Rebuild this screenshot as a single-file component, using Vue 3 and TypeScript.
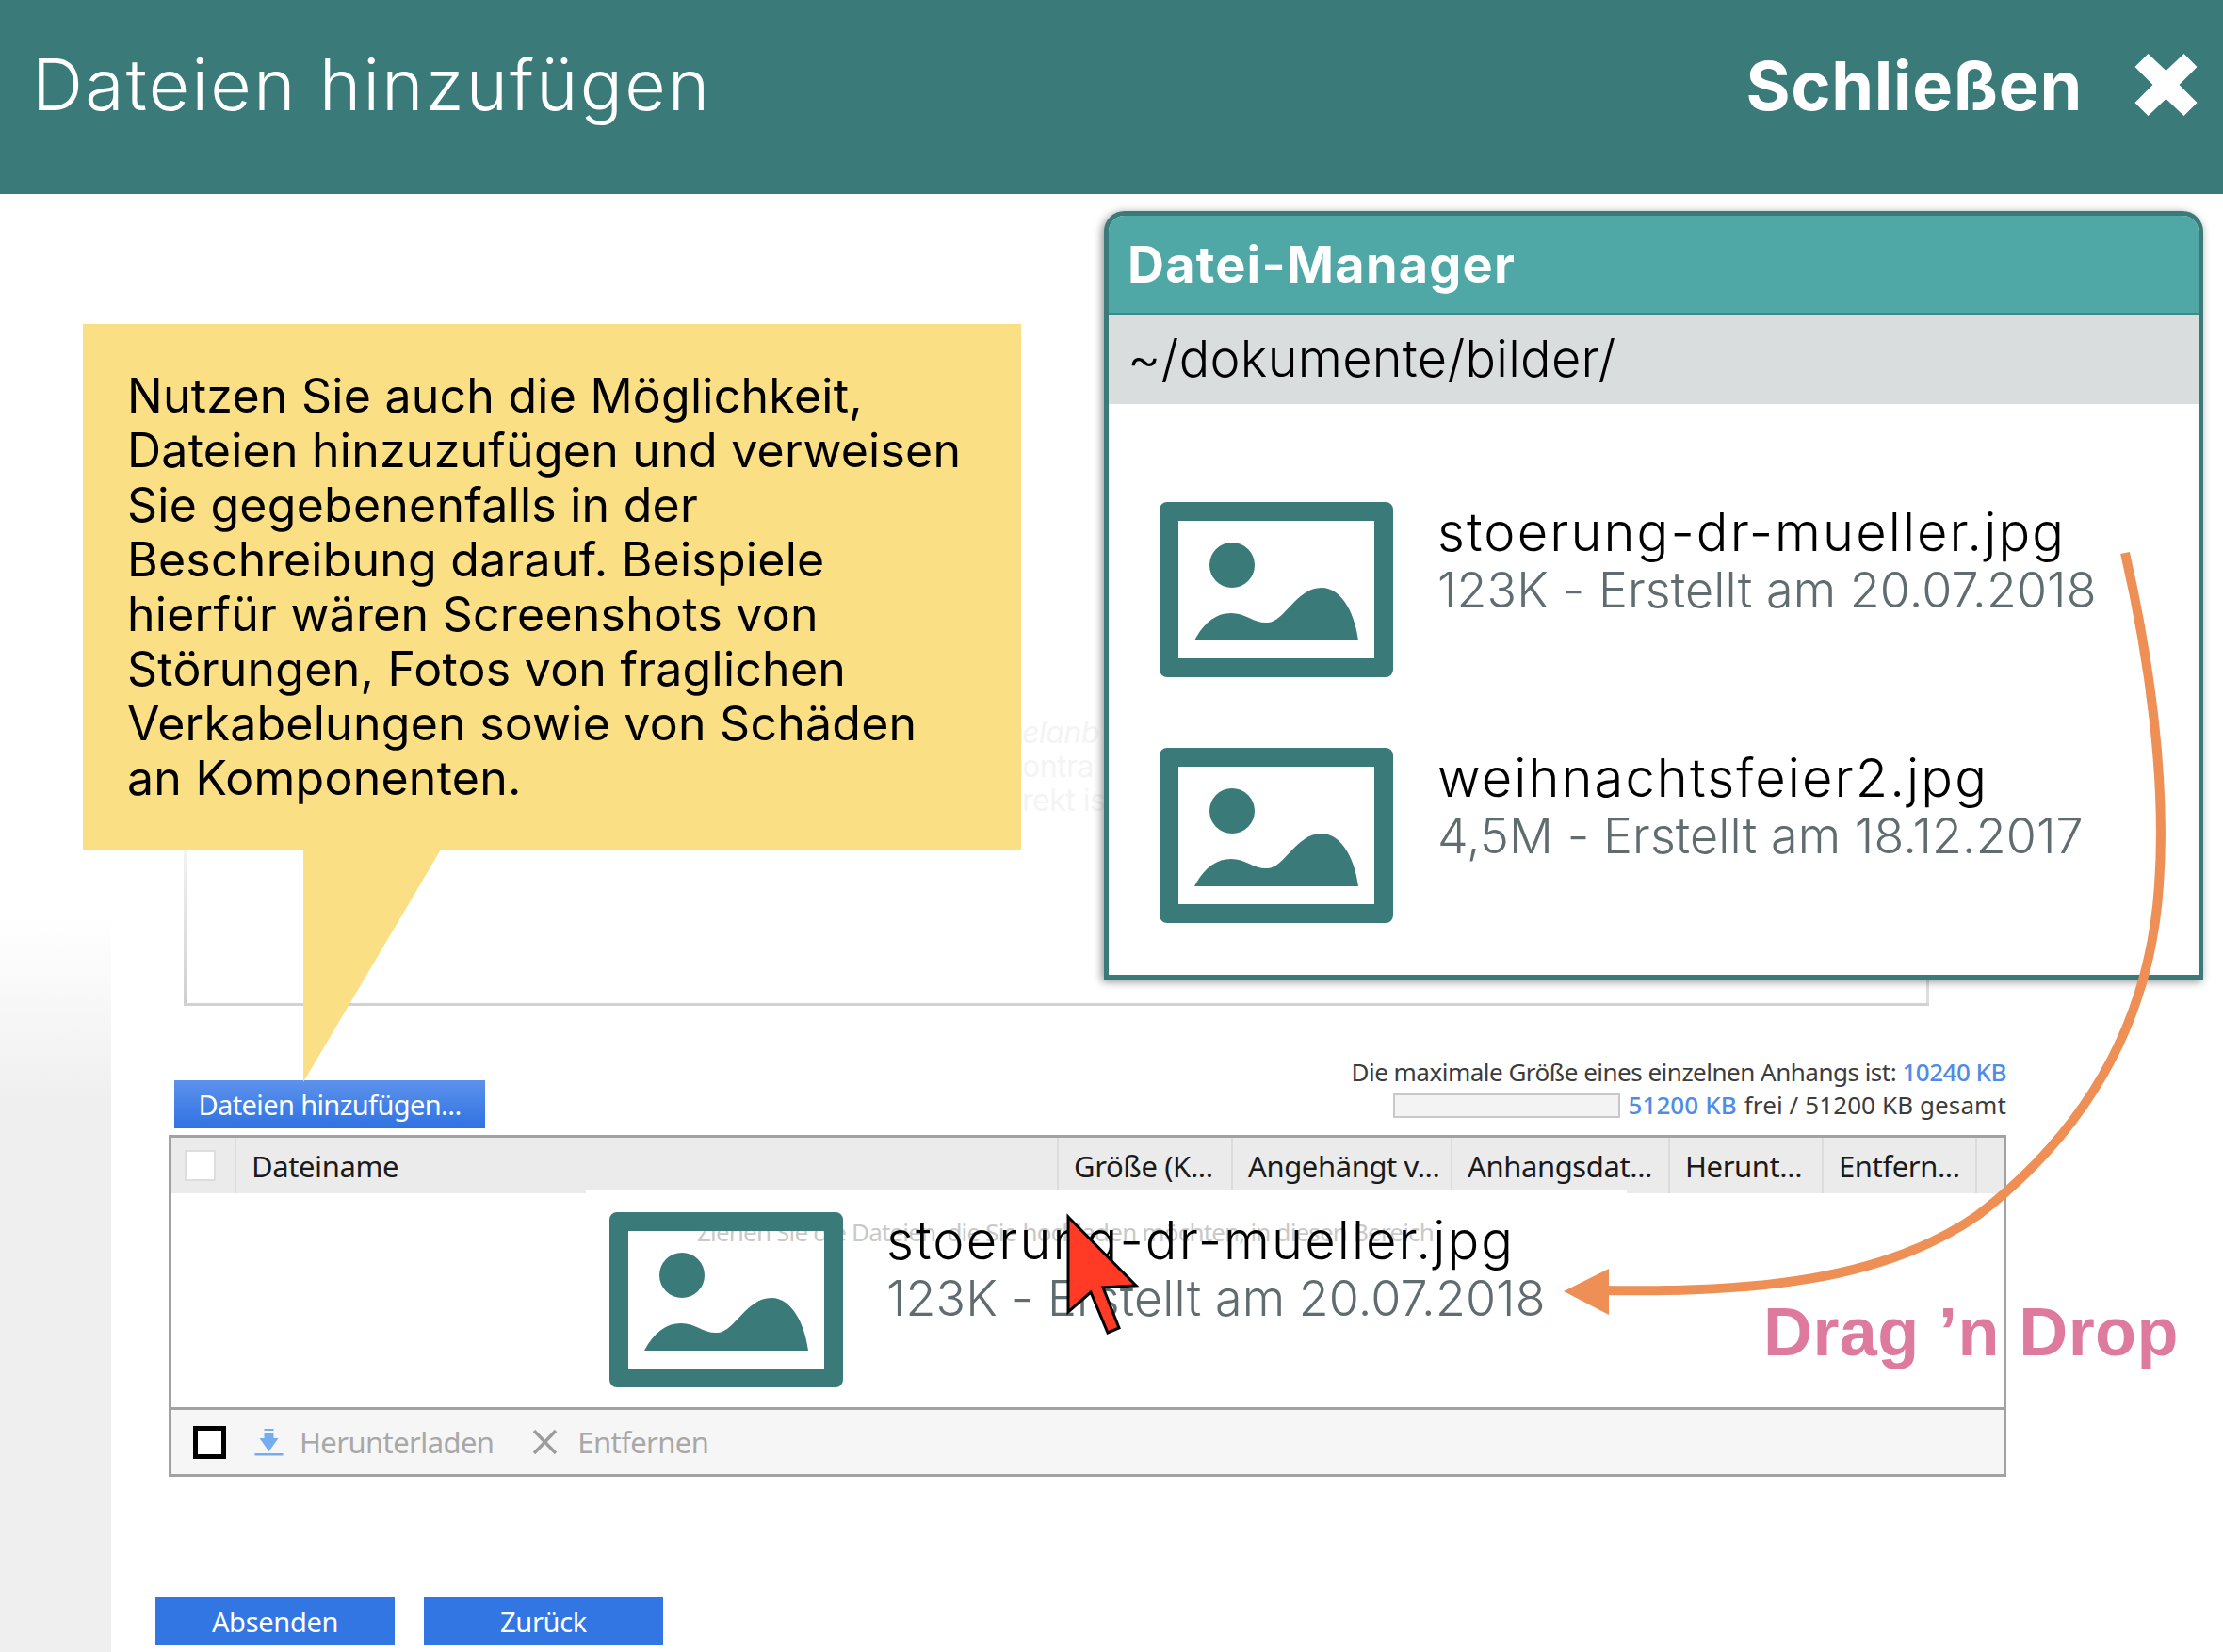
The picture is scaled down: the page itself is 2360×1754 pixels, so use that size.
<script setup lang="ts">
interface FileEntry {
  name: string
  meta: string
}

const managerFiles: FileEntry[] = [
  { name: 'stoerung-dr-mueller.jpg', meta: '123K - Erstellt am 20.07.2018' },
  { name: 'weihnachtsfeier2.jpg', meta: '4,5M - Erstellt am 18.12.2017' },
]

const tableColumns = ['Dateiname', 'Größe (K...', 'Angehängt v...', 'Anhangsdat...', 'Herunt...', 'Entfern...', '']

const calloutLines = [
  'Nutzen Sie auch die Möglichkeit,',
  'Dateien hinzuzufügen und verweisen',
  'Sie gegebenenfalls in der',
  'Beschreibung darauf. Beispiele',
  'hierfür wären Screenshots von',
  'Störungen, Fotos von fraglichen',
  'Verkabelungen sowie von Schäden',
  'an Komponenten.',
]
</script>

<template>
  <div class="page">
    <svg class="defs" width="0" height="0" aria-hidden="true">
      <symbol id="picture-icon" viewBox="0 0 248 186">
        <path fill-rule="evenodd" d="M8 0H240a8 8 0 0 1 8 8V178a8 8 0 0 1-8 8H8a8 8 0 0 1-8-8V8a8 8 0 0 1 8-8ZM20 20V166H228V20Z" />
        <circle cx="77" cy="67" r="24" />
        <path d="M37 147C47 128 60 118 76 118C92 118 100 129 115 128C133 127 145 91 172 91C195 91 208 122 211 147Z" />
      </symbol>
    </svg>

    <header class="topbar">
      <h1 class="topbar-title">Dateien hinzufügen</h1>
      <div class="topbar-close">
        <span>Schließen</span>
        <svg class="close-icon" viewBox="0 0 66 66" width="67" height="66">
          <path d="M0 14 14 0 33 18 52 0 66 14 47 33 66 52 52 66 33 48 14 66 0 52 19 33Z" fill="#fff" />
        </svg>
      </div>
    </header>

    <div class="body">
      <aside class="side"></aside>
      <main class="form">
        <div class="desc-box">
          <div class="ghost ghost-em">elanb</div>
          <div class="ghost">ontra</div>
          <div class="ghost">rekt is</div>
        </div>

        <div class="upload-row">
          <button class="btn btn-add" type="button">Dateien hinzufügen...</button>
          <div class="quota">
            <div>Die maximale Größe eines einzelnen Anhangs ist: <b class="quota-val">10240 KB</b></div>
            <div class="quota-line">
              <span class="quota-bar"></span>
              <b class="quota-val">51200 KB</b>
              <span>frei / 51200 KB gesamt</span>
            </div>
          </div>
        </div>

        <section class="table">
          <div class="table-head">
            <div class="head-check"><span class="check-light"></span></div>
            <div v-for="col in tableColumns" :key="col" class="head-cell">{{ col }}</div>
          </div>
          <div class="dropzone">Ziehen Sie die Dateien, die Sie hochladen möchten, in diesen Bereich</div>
          <div class="table-foot">
            <span class="check-dark"></span>
            <svg class="dl-icon" viewBox="0 0 30 29" width="31" height="29">
              <path d="M10 0H20V2H10ZM10 4H20V10H25L15 24 5 10H10ZM0 26H30V28.5H0Z" fill="#74acf0" />
            </svg>
            <span class="foot-label">Herunterladen</span>
            <svg class="rm-icon" viewBox="0 0 27 26" width="27" height="26">
              <path d="M2 1 25 25M25 1 2 25" stroke="#9c9c9c" stroke-width="3.5" fill="none" />
            </svg>
            <span class="foot-label">Entfernen</span>
          </div>
        </section>

        <div class="submit-row">
          <button class="btn btn-submit" type="button">Absenden</button>
          <button class="btn btn-submit" type="button">Zurück</button>
        </div>
      </main>
    </div>

    <!-- annotations lying over the form -->
    <div class="callout">
      <div v-for="line in calloutLines" :key="line" class="callout-line">{{ line }}</div>
      <svg class="callout-tail" viewBox="0 0 146 247" width="146" height="247">
        <path d="M0 0H146L0 247Z" fill="#fadf85" />
      </svg>
    </div>

    <section class="manager">
      <h2 class="manager-title">Datei-Manager</h2>
      <div class="manager-path">~/dokumente/bilder/</div>
      <ul class="manager-list">
        <li v-for="file in managerFiles" :key="file.name" class="file">
          <svg class="file-icon"><use href="#picture-icon" /></svg>
          <div class="file-text">
            <div class="file-name">{{ file.name }}</div>
            <div class="file-meta">{{ file.meta }}</div>
          </div>
        </li>
      </ul>
    </section>

    <div class="drag-strip"></div>
    <div class="file dragged">
      <svg class="file-icon"><use href="#picture-icon" /></svg>
      <div class="file-text">
        <div class="file-name">stoerung-dr-mueller.jpg</div>
        <div class="file-meta">123K - Erstellt am 20.07.2018</div>
      </div>
    </div>

    <svg class="drag-arrow" viewBox="0 0 2360 1754" width="2360" height="1754">
      <path d="M2256 587C2282 700 2300 830 2292 940C2282 1090 2210 1205 2100 1290C2000 1360 1860 1373 1700 1370" fill="none" stroke="#ee8f55" stroke-width="10" />
      <path d="M1660 1371 1708 1347V1396Z" fill="#ee8f55" />
      <path d="M1134 1292 1206 1365 1171 1367 1188 1410 1176 1415 1158 1372 1134 1393Z" fill="#ff3b25" stroke="#000" stroke-width="3" />
    </svg>

    <div class="drag-label">Drag ’n Drop</div>
  </div>
</template>

<style scoped>
.page {
  position: relative;
  width: 2360px;
  height: 1754px;
  overflow: hidden;
  background: #fff;
  font-family: Inter, "Noto Sans", sans-serif;
  color: #000;
}

.defs {
  position: absolute;
}

.topbar {
  display: flex;
  justify-content: space-between;
  height: 206px;
  padding: 0 27px 0 34px;
  box-sizing: border-box;
  background: #3a7b7a;
  color: #fff;
}

.topbar-title {
  margin: 47px 0 0;
  font-size: 75px;
  line-height: 86px;
  font-weight: 300;
  letter-spacing: 2.3px;
}

.topbar-close {
  display: flex;
  align-items: flex-start;
  gap: 55px;
  padding-top: 48px;
  font-size: 72px;
  line-height: 86px;
  font-weight: 700;
  letter-spacing: 0.7px;
}

.close-icon {
  margin-top: 9px;
}

.body {
  display: flex;
  height: 1548px;
}

.side {
  width: 118px;
  flex: none;
  background: linear-gradient(#fff 767px, #efefef 967px);
}

.form {
  flex: 1;
  min-width: 0;
  padding-left: 47px;
}

.desc-box {
  width: 1853px;
  height: 862px;
  margin-left: 30px;
  padding-top: 554px;
  box-sizing: border-box;
  border-bottom: 3px solid #d2d2d2;
  background:
    linear-gradient(#f4f4f4, #cfcfcf) left bottom / 3px 170px no-repeat,
    linear-gradient(#ddd, #ddd) right bottom / 3px 30px no-repeat;
}

.ghost {
  margin-left: 890px;
  font-size: 32px;
  line-height: 36px;
  letter-spacing: -0.5px;
  color: #f4f4f4;
  white-space: nowrap;
}

.ghost-em {
  font-style: italic;
}

.upload-row {
  display: flex;
  align-items: flex-end;
  justify-content: space-between;
  width: 1945px;
  height: 130px;
  margin-left: 20px;
}

.btn {
  border: 0;
  padding: 0;
  color: #fff;
  font-family: "Noto Sans", sans-serif;
  font-size: 29px;
}

.btn-add {
  width: 330px;
  height: 51px;
  background: linear-gradient(#5d92ec, #2f72e2);
  letter-spacing: -0.6px;
}

.quota {
  margin-bottom: 7px;
  font-family: "Noto Sans", sans-serif;
  font-size: 26px;
  line-height: 35px;
  color: #3c3c3c;
  letter-spacing: -0.5px;
  text-align: right;
  white-space: nowrap;
}

.quota-val {
  font-weight: 500;
  color: #4f8ce6;
}

.quota-line {
  display: flex;
  justify-content: flex-end;
  align-items: center;
  gap: 8px;
  letter-spacing: 0.1px;
}

.quota-bar {
  width: 241px;
  height: 26px;
  box-sizing: border-box;
  border: 2px solid #c8c8c8;
  background: #f3f3f3;
}

.table {
  display: flex;
  flex-direction: column;
  width: 1951px;
  height: 363px;
  margin-top: 7px;
  margin-left: 14px;
  box-sizing: border-box;
  border: 3px solid #a2a2a2;
}

.table-head {
  display: grid;
  grid-template-columns: 67px 873px 185px 233px 231px 163px 163px 1fr;
  height: 59px;
  background: #ebebeb;
  font-family: "Noto Sans", sans-serif;
  font-size: 31px;
  letter-spacing: -0.4px;
}

.head-check {
  display: flex;
  align-items: center;
  padding-left: 14px;
}

.check-light {
  width: 33px;
  height: 33px;
  box-sizing: border-box;
  border: 2px solid #ddd;
  background: #fff;
}

.head-cell {
  padding: 9px 0 0 16px;
  border-left: 2px solid #dcdcdc;
  white-space: nowrap;
  overflow: hidden;
  color: #1a1a1a;
}

.dropzone {
  height: 230px;
  padding: 23px 0 0 558px;
  box-sizing: border-box;
  border-bottom: 3px solid #a2a2a2;
  font-family: "Noto Sans", sans-serif;
  font-size: 26px;
  letter-spacing: -0.82px;
  color: #c9c9c9;
  white-space: nowrap;
}

.table-foot {
  display: flex;
  align-items: center;
  flex: 1;
  padding-left: 23px;
  background: #f6f6f6;
  font-family: "Noto Sans", sans-serif;
  font-size: 31px;
  letter-spacing: -0.6px;
  color: #a8a8a8;
}

.check-dark {
  width: 35px;
  height: 35px;
  box-sizing: border-box;
  border: 5px solid #000;
  background: #fff;
}

.dl-icon {
  margin-left: 30px;
}

.foot-label {
  margin-left: 17px;
}

.rm-icon {
  margin-left: 41px;
}

.rm-icon + .foot-label {
  margin-left: 21px;
}

.submit-row {
  display: flex;
  gap: 31px;
  margin-top: 128px;
}

.btn-submit {
  width: 254px;
  height: 51px;
  background: #3176e3;
  letter-spacing: -0.3px;
}

.callout {
  position: absolute;
  left: 88px;
  top: 344px;
  width: 996px;
  height: 558px;
  padding: 47px 0 0 47px;
  box-sizing: border-box;
  background: #fadf85;
}

.callout-line {
  font-size: 50px;
  line-height: 58px;
  letter-spacing: 0.25px;
  white-space: nowrap;
}

.callout-tail {
  position: absolute;
  left: 234px;
  top: 100%;
}

.manager {
  position: absolute;
  left: 1172px;
  top: 224px;
  width: 1167px;
  height: 816px;
  box-sizing: border-box;
  border: 5px solid #3a7b7a;
  border-radius: 22px 22px 0 0;
  background: #fff;
  box-shadow: -2px 2px 10px rgba(0, 0, 0, 0.45);
}

.manager-title {
  height: 105px;
  margin: 0;
  padding: 21px 0 0 20px;
  box-sizing: border-box;
  border-radius: 17px 17px 0 0;
  border-bottom: 2px solid #3a8a88;
  background: #4fa8a5;
  color: #fff;
  font-size: 54px;
  line-height: 62px;
  font-weight: 700;
  letter-spacing: 1.2px;
}

.manager-path {
  height: 95px;
  padding: 18px 0 0 20px;
  box-sizing: border-box;
  background: #dadddd;
  font-size: 54px;
  line-height: 58px;
  font-weight: 300;
  letter-spacing: 0.3px;
}

.manager-list {
  display: flex;
  flex-direction: column;
  gap: 75px;
  margin: 0;
  padding: 104px 0 0 54px;
  list-style: none;
}

.file {
  display: flex;
  gap: 47px;
}

.file-icon {
  width: 248px;
  height: 186px;
  flex: none;
  fill: #3a7b7a;
}

.file-text {
  padding-top: 2px;
  white-space: nowrap;
}

.file-name {
  font-size: 56px;
  line-height: 61px;
  font-weight: 300;
  letter-spacing: 2.1px;
}

.file-meta {
  font-size: 52px;
  line-height: 61px;
  font-weight: 300;
  letter-spacing: 0.1px;
  color: #5f6c70;
}

.drag-strip {
  position: absolute;
  left: 622px;
  top: 1264px;
  width: 1105px;
  height: 3px;
  background: #fff;
}

.dragged {
  position: absolute;
  left: 647px;
  top: 1285px;
  gap: 46px;
}

.dragged .file-icon {
  margin-top: 2px;
}

.drag-arrow {
  position: absolute;
  left: 0;
  top: 0;
  pointer-events: none;
}

.drag-label {
  position: absolute;
  left: 1872px;
  top: 1372px;
  font-family: "Liberation Sans", sans-serif;
  font-size: 72px;
  line-height: 84px;
  font-weight: 700;
  letter-spacing: 0.4px;
  color: #df7a9f;
  white-space: nowrap;
}
</style>
